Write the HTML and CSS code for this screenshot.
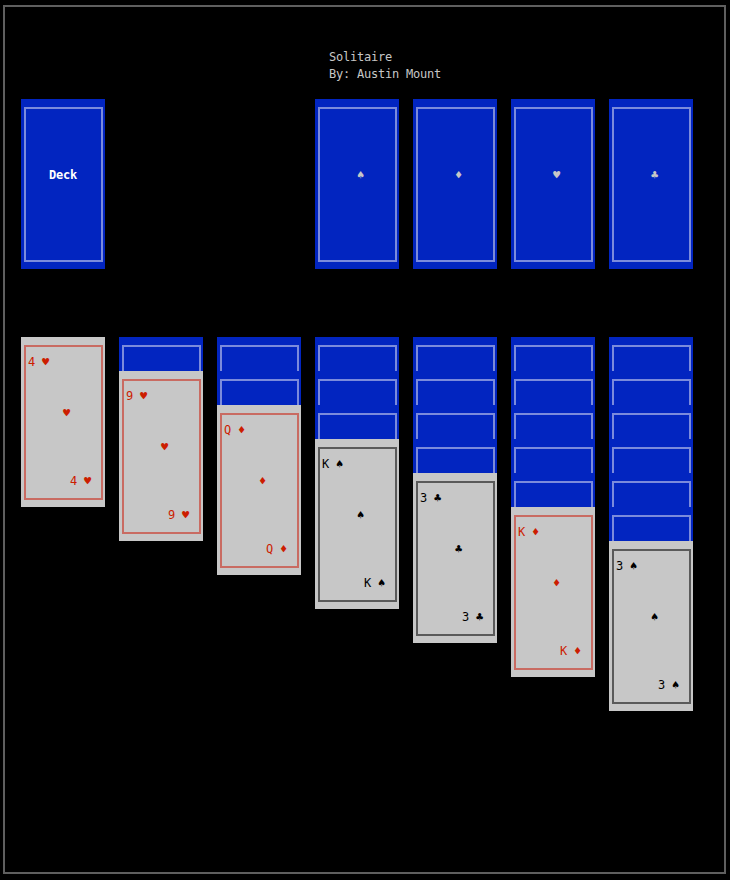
FILE: index.html
```html
<!DOCTYPE html>
<html lang="en">

<head>
    <title>Solitaire</title>
    <link rel="stylesheet" href="styles.css">
</head>

<body>
    <div class="screen">
        <div class="title">Solitaire<br>By: Austin Mount</div>

        <div class="foundations">
            <div class="card back"><div class="frame"><p class="mid deck">Deck</p></div></div>
            <div class="card back slot-4"><div class="frame"><p class="mid">♠</p></div></div>
            <div class="card back"><div class="frame"><p class="mid">♦</p></div></div>
            <div class="card back"><div class="frame"><p class="mid">♥</p></div></div>
            <div class="card back"><div class="frame"><p class="mid">♣</p></div></div>
        </div>

        <div class="tableau">
            <div class="pile">
                <div class="card face red"><div class="frame"><p>4 ♥</p><p class="mid">♥</p><p class="low">4 ♥</p></div></div>
            </div>
            <div class="pile">
                <div class="card back stub"><div class="frame"></div></div>
                <div class="card face red"><div class="frame"><p>9 ♥</p><p class="mid">♥</p><p class="low">9 ♥</p></div></div>
            </div>
            <div class="pile">
                <div class="card back stub"><div class="frame"></div></div>
                <div class="card back stub"><div class="frame"></div></div>
                <div class="card face red"><div class="frame"><p>Q ♦</p><p class="mid">♦</p><p class="low">Q ♦</p></div></div>
            </div>
            <div class="pile">
                <div class="card back stub"><div class="frame"></div></div>
                <div class="card back stub"><div class="frame"></div></div>
                <div class="card back stub"><div class="frame"></div></div>
                <div class="card face"><div class="frame"><p>K ♠</p><p class="mid">♠</p><p class="low">K ♠</p></div></div>
            </div>
            <div class="pile">
                <div class="card back stub"><div class="frame"></div></div>
                <div class="card back stub"><div class="frame"></div></div>
                <div class="card back stub"><div class="frame"></div></div>
                <div class="card back stub"><div class="frame"></div></div>
                <div class="card face"><div class="frame"><p>3 ♣</p><p class="mid">♣</p><p class="low">3 ♣</p></div></div>
            </div>
            <div class="pile">
                <div class="card back stub"><div class="frame"></div></div>
                <div class="card back stub"><div class="frame"></div></div>
                <div class="card back stub"><div class="frame"></div></div>
                <div class="card back stub"><div class="frame"></div></div>
                <div class="card back stub"><div class="frame"></div></div>
                <div class="card face red"><div class="frame"><p>K ♦</p><p class="mid">♦</p><p class="low">K ♦</p></div></div>
            </div>
            <div class="pile">
                <div class="card back stub"><div class="frame"></div></div>
                <div class="card back stub"><div class="frame"></div></div>
                <div class="card back stub"><div class="frame"></div></div>
                <div class="card back stub"><div class="frame"></div></div>
                <div class="card back stub"><div class="frame"></div></div>
                <div class="card back stub"><div class="frame"></div></div>
                <div class="card face"><div class="frame"><p>3 ♠</p><p class="mid">♠</p><p class="low">3 ♠</p></div></div>
            </div>
        </div>
    </div>
</body>

</html>
```

FILE: styles.css
```css
html, body {
    margin: 0;
    background-color: #000000;
}

body {
    font-family: "DejaVu Sans Mono", monospace;
    font-size: 12px;
    line-height: 17px;
    letter-spacing: -0.22px;
    color: #c7c7c7;
}

p {
    margin: 0;
    white-space: pre;
}

.screen {
    width: 719px;
    height: 865px;
    margin: 5px 0 0 3px;
    padding-top: 0;
    border: 2px solid #5f5f5f;
}

.title {
    padding: 42px 0 0 324px;
}

.foundations, .tableau {
    display: grid;
    grid-template-columns: repeat(7, 84px);
    column-gap: 14px;
    margin-left: 16px;
    align-items: start;
}

.foundations {
    margin-top: 16px;
}

.tableau {
    margin-top: 68px;
}

.slot-4 {
    grid-column: 4;
}

.card {
    height: 170px;
    padding: 8px 2px 0 3px;
    box-sizing: border-box;
    overflow: hidden;
}

.stub {
    height: 34px;
}

.back {
    background-color: #0225c0;
    color: #c7c7c7;
}

.face {
    background-color: #c7c7c7;
    color: #000000;
}

.face.red {
    color: #cc1d00;
}

.frame {
    height: 155px;
    box-sizing: border-box;
    padding: 7px 0 0 2px;
    border: 2px solid #5a5a5a;
}

.back .frame {
    border-color: #7b8bdc;
}

.red .frame {
    border-color: #c96b62;
}

.mid {
    margin-top: 34px;
    padding-left: 35px;
}

.back .mid {
    margin-top: 51px;
}

.deck {
    padding-left: 21px;
    font-weight: bold;
    color: #ffffff;
}

.low {
    margin-top: 51px;
    padding-left: 42px;
}
```
